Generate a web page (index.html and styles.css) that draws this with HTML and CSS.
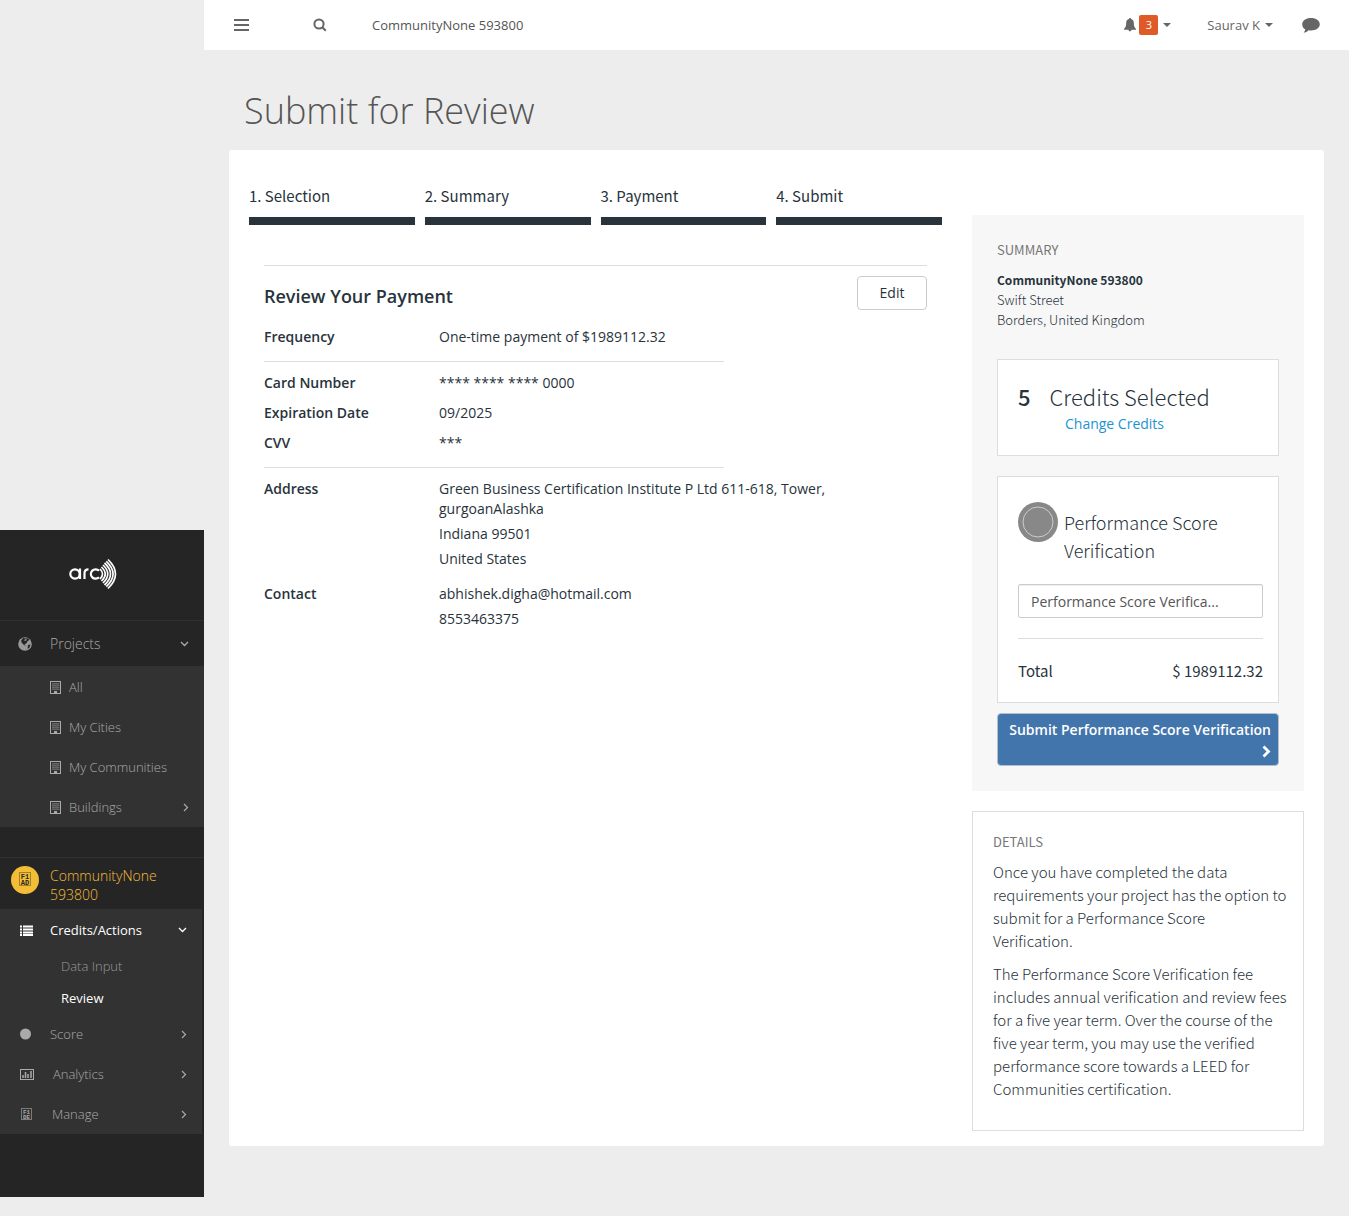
FILE: index.html
```html
<!DOCTYPE html>
<html lang="en">
<head>
<meta charset="utf-8">
<title>Submit for Review</title>
<link rel="stylesheet" href="styles.css">
</head>
<body>
<svg class="sprite" aria-hidden="true">
  <symbol id="building" viewBox="0 0 11 13"><rect x=".5" y=".5" width="10" height="12" fill="none" stroke="currentColor"/><path d="M2 2h7v7H2z" fill="currentColor" opacity=".25"/><path d="M3 2v7M5 2v7M7 2v7M9 2v7" stroke="currentColor" stroke-dasharray="1 1" opacity=".5"/><path d="M4 10h3v2H4z" fill="currentColor"/></symbol>
  <symbol id="chev-down" viewBox="0 0 9 6"><path d="M1 1l3.500 3.500L8 1" fill="none" stroke="currentColor" stroke-width="1.300"/></symbol>
  <symbol id="chev-right" viewBox="0 0 6 9"><path d="M1 1l3.500 3.500L1 8" fill="none" stroke="currentColor" stroke-width="1.200"/></symbol>
</svg>
<div class="app">
  <aside class="sidebar">
    <a class="logo" href="#" aria-label="arc">
      <svg width="48" height="32" viewBox="0 0 48 32" fill="none" stroke="#fff">
        <g stroke-width="2.200"><circle cx="6" cy="16" r="4.700"/><path d="M11 10.500V21M15.500 21v-6c0-2.500 1.500-3.600 4-3.600M30 12.800a4.700 4.700 0 1 0 0 6.400"/></g>
        <g stroke-width="1.700"><path d="M31 11q5 5 0 10M32.500 9q7.500 7 0 14M34 7q9.500 9 0 18M35.500 5q12 11 0 22M37.300 3.400q13.500 12.600 0 25.200M39 1.500q15 14.500 0 29"/></g>
      </svg>
    </a>
    <nav>
      <a class="projects" href="#">
        <svg class="lead" width="14" height="14" viewBox="0 0 14 14"><circle cx="7" cy="7" r="6.800" fill="currentColor"/><path d="M5 1l3 .5 2-.3 1.500 1.600-2 1.400-1 2-2 1L8 9 6 8 4 6 3 4zM10 8l2.500-.5-1 3-2 1.500z" fill="#252525"/><path d="M6 3l2-1 1 1-2 1z" fill="currentColor"/></svg>
        <span>Projects</span>
        <svg class="end" width="9" height="6"><use href="#chev-down"/></svg>
      </a>
      <ul class="sub">
        <li><a href="#"><svg width="11" height="13"><use href="#building"/></svg><span>All</span></a></li>
        <li><a href="#"><svg width="11" height="13"><use href="#building"/></svg><span>My Cities</span></a></li>
        <li><a href="#"><svg width="11" height="13"><use href="#building"/></svg><span>My Communities</span></a></li>
        <li><a href="#"><svg width="11" height="13"><use href="#building"/></svg><span>Buildings</span><svg class="end" width="6" height="9"><use href="#chev-right"/></svg></a></li>
      </ul>
      <a class="community" href="#">
        <svg width="28" height="28" viewBox="0 0 28 28"><circle cx="14" cy="14" r="14" fill="#f3bd36"/><rect x="8.500" y="6.500" width="11" height="13" fill="none" stroke="#a07f30"/><text class="code" x="14" y="12.500" fill="#252525">F1</text><text class="code" x="14" y="18.500" fill="#252525">AD</text></svg>
        <span>CommunityNone 593800</span>
      </a>
      <ul class="menu">
        <li><a class="on" href="#"><svg class="lead" width="14" height="11" viewBox="0 0 14 11"><path d="M0 1.500h2M3 1.500h10M0 4.500h2M3 4.500h10M0 7.500h2M3 7.500h10M0 10h2M3 10h10" stroke="currentColor" stroke-width="1.800"/></svg><span>Credits/Actions</span><svg class="end" width="9" height="6"><use href="#chev-down"/></svg></a>
          <ul class="inner"><li><a href="#">Data Input</a></li><li><a class="on" href="#">Review</a></li></ul>
        </li>
        <li><a href="#"><svg class="lead" width="14" height="12" viewBox="0 0 14 12"><circle cx="5.500" cy="6" r="5.500" fill="currentColor"/></svg><span>Score</span><svg class="end" width="6" height="9"><use href="#chev-right"/></svg></a></li>
        <li><a href="#"><svg class="lead" width="17" height="11" viewBox="0 0 17 11"><rect x=".5" y=".5" width="13" height="10" fill="none" stroke="currentColor"/><path d="M3 9V6M5.500 9V3M8 9V5M11 9V2" stroke="currentColor" stroke-width="1.500"/></svg><span>Analytics</span><svg class="end" width="6" height="9"><use href="#chev-right"/></svg></a></li>
        <li><a href="#"><svg class="lead" width="16" height="12" viewBox="0 0 16 12"><rect x="1.500" y=".5" width="10" height="11" fill="none" stroke="currentColor" opacity=".6"/><text class="code small" x="6.500" y="5.500" fill="currentColor">F1</text><text class="code small" x="6.500" y="10.500" fill="currentColor">DE</text></svg><span>Manage</span><svg class="end" width="6" height="9"><use href="#chev-right"/></svg></a></li>
      </ul>
    </nav>
  </aside>
  <div class="page">
    <header class="topbar">
      <button class="icon-btn" type="button" aria-label="Menu"><svg width="15" height="12" viewBox="0 0 15 12"><path d="M0 1h15M0 6h15M0 11h15" stroke="currentColor" stroke-width="2"/></svg></button>
      <button class="icon-btn search" type="button" aria-label="Search"><svg width="14" height="14" viewBox="0 0 14 14" fill="none" stroke="currentColor" stroke-width="2"><circle cx="6" cy="6" r="4.600"/><path d="M9.300 9.300l3.500 3.500"/></svg></button>
      <span class="crumb">CommunityNone 593800</span>
      <button class="icon-btn alerts" type="button" aria-label="3 notifications"><svg width="12" height="14" viewBox="0 0 12 14"><path d="M6 0c.7 0 1 .4 1 1 2 .5 2.800 2 2.800 4 0 3 .7 4.500 2.200 6v.7H7.500c0 .9-.6 1.500-1.500 1.500s-1.500-.6-1.500-1.500H0V11c1.500-1.500 2.200-3 2.200-6C2.200 3 3 1.500 5 1c0-.6.300-1 1-1z" fill="currentColor"/></svg><span class="count">3</span><i class="caret"></i></button>
      <button class="icon-btn user" type="button">Saurav K<i class="caret"></i></button>
      <button class="icon-btn" type="button" aria-label="Messages"><svg width="18" height="15" viewBox="0 0 18 15"><path d="M9 0c5 0 8.800 2.700 8.800 6.200S14 12.400 9 12.400c-.8 0-1.600-.1-2.400-.2C5.200 13.600 3.500 14.400 1.600 14.600c1-.9 1.500-1.900 1.600-3.300C1.300 10.200.2 8.300.2 6.200.2 2.700 4 0 9 0z" fill="currentColor"/></svg></button>
    </header>
    <h1>Submit for Review</h1>
    <main class="panel">
      <section class="flow">
        <ol class="steps"><li>1. Selection</li><li>2. Summary</li><li>3. Payment</li><li>4. Submit</li></ol>
        <div class="review">
          <div class="review-head"><h2>Review Your Payment</h2><button class="edit" type="button">Edit</button></div>
          <dl class="part lined"><dt>Frequency</dt><dd>One-time payment of $1989112.32</dd></dl>
          <dl class="part lined"><dt>Card Number</dt><dd>**** **** **** 0000</dd><dt>Expiration Date</dt><dd>09/2025</dd><dt>CVV</dt><dd>***</dd></dl>
          <dl class="part wide"><dt>Address</dt><dd><p>Green Business Certification Institute P Ltd 611-618, Tower, gurgoanAlashka</p><p>Indiana 99501</p><p>United States</p></dd><dt>Contact</dt><dd><p>abhishek.digha@hotmail.com</p><p>8553463375</p></dd></dl>
        </div>
      </section>
      <aside class="side">
        <section class="summary">
          <h3>SUMMARY</h3>
          <address><strong>CommunityNone 593800</strong><br>Swift Street<br>Borders, United Kingdom</address>
          <div class="card credits"><div class="selected"><b>5</b><span>Credits Selected</span></div><a href="#">Change Credits</a></div>
          <div class="card order">
            <div class="product"><svg width="40" height="40" viewBox="0 0 40 40"><circle cx="20" cy="20" r="20" fill="#888"/><circle cx="20" cy="20" r="15" fill="none" stroke="#ccc"/></svg><label for="kind">Performance Score Verification</label></div>
            <select id="kind"><option>Performance Score Verifica...</option></select>
            <div class="total"><span>Total</span><span>$ 1989112.32</span></div>
          </div>
          <button class="submit" type="submit">Submit Performance Score Verification <svg width="9" height="13" viewBox="0 0 9 13"><path d="M1.500 1.500l5 5-5 5" fill="none" stroke="#fff" stroke-width="2.800"/></svg></button>
        </section>
        <section class="details">
          <h3>DETAILS</h3>
          <p>Once you have completed the data requirements your project has the option to submit for a Performance Score Verification.</p>
          <p>The Performance Score Verification fee includes annual verification and review fees for a five year term. Over the course of the five year term, you may use the verified performance score towards a LEED for Communities certification.</p>
        </section>
      </aside>
    </main>
  </div>
</div>
</body>
</html>
```
FILE: styles.css
```css
* { box-sizing: border-box; }
body { margin: 0; background: #ededed; color: #28333c; font: 14px/20px "Open Sans", sans-serif; }
ul, ol, dl, dd, p, h1, h2, h3 { margin: 0; padding: 0; list-style: none; }
a { color: inherit; text-decoration: none; }
button { font: inherit; cursor: pointer; }
svg { flex: none; }
.sprite { display: none; }
.app { display: grid; grid-template-columns: 204px minmax(0, 1fr); align-items: start; }

.sidebar { margin-top: 530px; padding-bottom: 63px; background: #252525; color: #aaa; font-weight: 300; }
.sidebar a { display: flex; align-items: center; }
.sidebar .end { margin-left: auto; }
.sidebar .logo { height: 90px; padding: 0 0 2px 69px; }
.sidebar .projects { height: 46px; padding: 0 15px 0 18px; border-top: 1px solid #303030; }
.projects .lead { margin-right: 18px; color: #999; }
.sub { background: #323232; font-size: 13px; padding-top: 1px; }
.sub a { height: 40px; padding: 0 15px 0 50px; gap: 8px; }
.sidebar .community { height: 52px; margin-top: 30px; padding: 0 40px 4px 11px; gap: 11px; align-items: flex-start; border-top: 1px solid #303030; color: #f3bd36; line-height: 19px; }
.community svg { margin-top: 8px; }
.community span { margin-top: 8px; }
.code { font: 700 7px "Liberation Mono", monospace; text-anchor: middle; }
.small { font-size: 6px; }
.menu { margin-right: 2px; padding-top: 1px; background: #323232; font-size: 13px; }
.menu > li > a { height: 40px; padding: 0 15px 0 20px; gap: 16px; }
.inner { padding-left: 61px; }
.inner a { height: 32px; }
.inner a:not(.on) { color: #999; }
.sidebar .on { color: #fff; font-weight: 400; }

.topbar { display: flex; align-items: center; height: 50px; padding: 0 29px 0 30px; background: #fff; color: #666; font-size: 13px; }
.icon-btn { display: flex; align-items: center; padding: 0; border: 0; background: none; color: #666; }
.search { margin-left: 64px; }
.crumb { margin-left: 45px; color: #555; }
.alerts { margin-left: auto; }
.user { margin: 0 29px 0 36px; }
.count { margin-left: 3px; width: 19px; border-radius: 2px; background: #df5a26; color: #fff; font-size: 11px; text-align: center; }
.caret { margin-left: 5px; border: 4px solid transparent; border-top-color: currentColor; border-bottom: 0; }
h1 { padding: 36px 40px 14px; color: #555; font-size: 36px; line-height: 50px; font-weight: 300; }

.panel { display: grid; grid-template-columns: minmax(0, 1fr) 332px; gap: 30px; margin: 0 25px 70px; padding: 35px 20px 15px; border-radius: 3px; background: #fff; }
.steps { display: grid; grid-template-columns: repeat(4, 1fr); gap: 10px; font: 400 15px/22px "Noto Sans CJK SC", sans-serif; }
.steps li { padding-bottom: 10px; border-bottom: 8px solid #28333c; }
.review { margin: 40px 15px 0; border-top: 1px solid #ddd; }
.review-head { display: flex; justify-content: space-between; padding: 10px 0 17px; }
h2 { font-size: 18px; line-height: 40px; height: 34px; font-weight: 600; }
.edit { width: 70px; height: 34px; border: 1px solid #ccc; border-radius: 4px; background: #fff; color: #28333c; }
.part { display: grid; grid-template-columns: 175px 1fr; row-gap: 10px; }
.part dt { font-weight: 600; }
.lined { width: 460px; max-width: 100%; padding-bottom: 14px; margin-bottom: 11px; border-bottom: 1px solid #ddd; }
.wide { margin-right: 70px; row-gap: 15px; }
.wide p + p { margin-top: 5px; }

.side { padding-top: 30px; font-family: "Noto Sans CJK SC", sans-serif; }
.summary { padding: 25px; background: #f7f7f7; }
h3 { color: #777; font-size: 13px; line-height: 20px; font-weight: 400; }
address { margin: 10px 0 29px; font-size: 13px; font-style: normal; font-weight: 300; }
address strong { font-size: 12px; font-weight: 700; }
.card { padding: 20px; border: 1px solid #ddd; background: #fff; }
.credits { height: 97px; }
.selected { display: flex; gap: 19px; font-size: 22px; line-height: 32px; font-weight: 300; }
.selected b { font-weight: 500; }
.credits a { display: block; margin: 2px 0 0 47px; color: #1c94d2; font-family: "Open Sans", sans-serif; }
.order { margin: 20px 0 10px; padding: 25px 15px 20px 20px; }
.product { display: flex; gap: 6px; font-size: 18px; line-height: 28px; font-weight: 300; }
.product label { padding-top: 6px; }
select { appearance: none; display: block; width: 100%; height: 34px; margin: 20px 0; padding: 0 12px; border: 1px solid #ccc; border-radius: 2px; background: #fff; box-shadow: inset 0 1px 1px #eee; color: #555; font: 14px "Open Sans", sans-serif; }
.total { display: flex; justify-content: space-between; padding-top: 21px; border-top: 1px solid #ddd; font-size: 15px; line-height: 22px; font-weight: 400; }
.submit { display: block; width: 100%; padding: 5px 7px 4px; border: 1px solid #b4bfcc; border-radius: 4px; background: #4275ac; color: #fff; font: 600 14px/21px "Open Sans", sans-serif; text-align: right; }
.submit svg { vertical-align: -2px; }
.details { margin-top: 20px; padding: 20px 15px 30px 20px; border: 1px solid #ddd; font-size: 15px; line-height: 23px; }
.details h3 { margin-bottom: 8px; }
.details p + p { margin-top: 10px; }
.details p { font-weight: 300; }
```
